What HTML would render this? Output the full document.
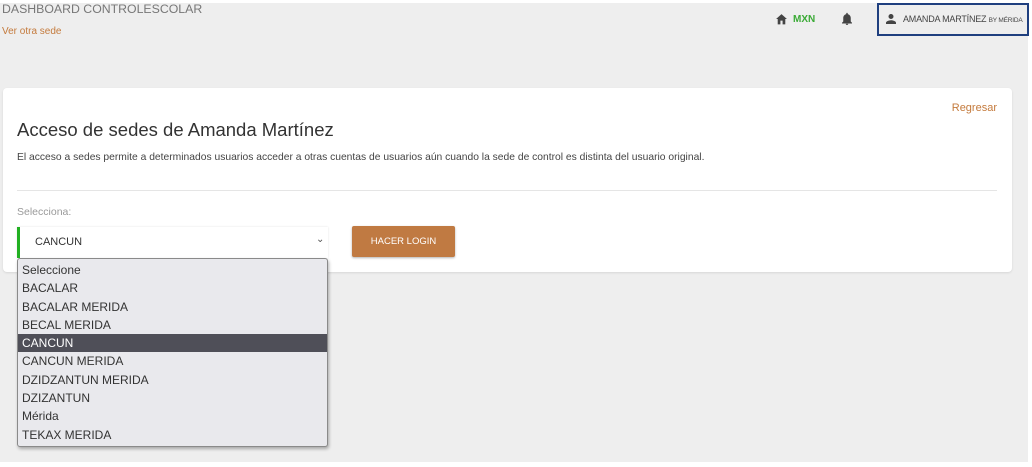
<!DOCTYPE html>
<html><head><meta charset="utf-8"><style>
*{margin:0;padding:0;box-sizing:border-box}
body{width:1032px;height:467px;background:#fff;font-family:"Liberation Sans",sans-serif;position:relative;overflow:hidden}
.bg{position:absolute;left:0;top:3px;width:1028px;height:459px;background:#eeeeee}
.abs{position:absolute;white-space:nowrap}
.card{position:absolute;left:3px;top:88px;width:1009px;height:184px;background:#fff;border-radius:4px;box-shadow:0 1px 2px rgba(0,0,0,.1)}
.dd{position:absolute;left:17px;top:258px;width:311px;height:189px;background:#e9e9ed;border:1px solid #8a8a8a;border-radius:3px;box-shadow:1px 2px 3px rgba(0,0,0,.3)}
.dd div{height:18.3px;line-height:18px;padding-left:4px;font-size:12px;color:#333}
.dd .sel{background:#4f4f58;color:#fff}
</style></head><body>
<div class="bg"></div>
<div class="abs" style="left:2px;top:2px;font-size:12.3px;color:#777">DASHBOARD CONTROLESCOLAR</div>
<div class="abs" style="left:2px;top:26px;font-size:10px;color:#c47a3c">Ver otra sede</div>
<svg class="abs" style="left:775px;top:13px" width="13" height="12" viewBox="0 0 24 22"><path d="M10 21v-7h4v7h5v-10h3L12 2 2 11h3v10z" fill="#444"/></svg>
<div class="abs" style="left:793px;top:14px;font-size:10px;color:#3aaa35;font-weight:bold">MXN</div>
<svg class="abs" style="left:841px;top:12px" width="12" height="14" viewBox="0 0 24 26"><path d="M12 25c1.5 0 2.5-1 2.5-2.5h-5C9.5 24 10.5 25 12 25zm7.5-7V11c0-4-2.5-7-6-7.8V2a1.5 1.5 0 0 0-3 0v1.2C7 4 4.5 7 4.5 11v7L2 20.5V22h20v-1.5z" fill="#444"/></svg>
<div class="abs" style="left:877px;top:3px;width:152px;height:33px;border:2px solid #1f3f7f"></div>
<svg class="abs" style="left:885px;top:13px" width="12" height="12" viewBox="0 0 24 24"><path d="M12 12a5 5 0 1 0 0-10 5 5 0 0 0 0 10zm0 2.5c-3.3 0-10 1.7-10 5V22h20v-2.5c0-3.3-6.7-5-10-5z" fill="#444"/></svg>
<div class="abs" style="left:903px;top:14px;font-size:9px;color:#444;letter-spacing:-0.2px">AMANDA MARTÍNEZ <span style="font-size:6.5px">BY MÉRIDA</span></div>
<div class="card">
<div class="abs" style="right:15px;top:14px;font-size:11px;color:#c47a3c">Regresar</div>
<div class="abs" style="left:14px;top:31px;font-size:18.5px;color:#333">Acceso de sedes de Amanda Martínez</div>
<div class="abs" style="left:14px;top:64px;font-size:10.3px;color:#444">El acceso a sedes permite a determinados usuarios acceder a otras cuentas de usuarios aún cuando la sede de control es distinta del usuario original.</div>
<div class="abs" style="left:14px;top:102px;width:980px;height:1px;background:#e5e5e5"></div>
<div class="abs" style="left:14px;top:118px;font-size:10.5px;color:#999">Selecciona:</div>
<div class="abs" style="left:14px;top:139px;width:311px;height:31px;border-left:3px solid #22b022;box-shadow:0 0 2px rgba(0,0,0,.12);background:#fff"></div>
<div class="abs" style="left:32px;top:148px;font-size:11px;color:#333">CANCUN</div>
<div class="abs" style="left:313px;top:146px;font-size:10px;color:#555">&#8964;</div>
<div class="abs" style="left:349px;top:138px;width:103px;height:31px;background:#c07a42;border-radius:2px;box-shadow:0 1px 2px rgba(0,0,0,.3);color:#fff;font-size:9.5px;text-align:center;line-height:31px">HACER LOGIN</div>
</div>
<div class="dd" style="padding-top:2px">
<div>Seleccione</div><div>BACALAR</div><div>BACALAR MERIDA</div><div>BECAL MERIDA</div><div class="sel">CANCUN</div><div>CANCUN MERIDA</div><div>DZIDZANTUN MERIDA</div><div>DZIZANTUN</div><div>Mérida</div><div>TEKAX MERIDA</div>
</div>
</body></html>
